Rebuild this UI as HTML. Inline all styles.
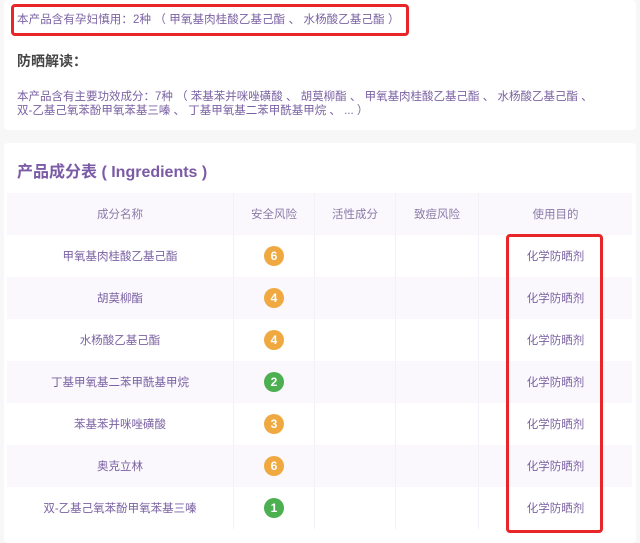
<!DOCTYPE html>
<html><head><meta charset="utf-8"><style>
body{margin:0;width:640px;height:543px;background:#f7f7f7;font-family:"Liberation Sans","Noto Sans CJK SC",sans-serif;position:relative;overflow:hidden}
.card{position:absolute;left:4px;width:632px;background:#fff;border-radius:4px}
.p{color:#7b62a3;font-size:11.5px}
.red{position:absolute;border:3px solid #e8262a;border-radius:4px}
table{position:absolute;left:7px;top:193px;width:625px;border-collapse:collapse;font-size:11.5px;color:#7b62a3}
td{height:42px;text-align:center;padding:0;border-right:1px solid #f3f0f7}
td:last-child{border-right:none}
tr:nth-child(odd){background:#faf8fd}
tr:first-child td{color:#8a7aa8}
.b{display:inline-block;width:20px;height:20px;border-radius:50%;color:#fff;font-size:12px;line-height:20px;font-weight:bold}
.o{background:#f0a940}.g{background:#4caf50}
</style></head><body>
<div class="card" style="top:0;height:130px"></div>
<div class="card" style="top:143px;height:400px"></div>
<div class="p" style="position:absolute;left:17px;top:11px;letter-spacing:0.1px">本产品含有孕妇慎用：2种 （ 甲氧基肉桂酸乙基己酯 、 水杨酸乙基己酯 ）</div>
<div class="red" style="left:11px;top:4px;width:392px;height:26px"></div>
<div style="position:absolute;left:17px;top:51px;font-size:14px;font-weight:bold;color:#444">防晒解读：</div>
<div class="p" style="position:absolute;left:17px;top:90px;line-height:14px">本产品含有主要功效成分：7种 （ 苯基苯并咪唑磺酸 、 胡莫柳酯 、 甲氧基肉桂酸乙基己酯 、 水杨酸乙基己酯 、<br>双-乙基己氧苯酚甲氧苯基三嗪 、 丁基甲氧基二苯甲酰基甲烷 、 ... ）</div>
<div style="position:absolute;left:17px;top:158px;font-size:16px;font-weight:bold;color:#7b5aa6">产品成分表 ( Ingredients )</div>
<table>
<tr><td style="width:226px">成分名称</td><td style="width:80px">安全风险</td><td style="width:80px">活性成分</td><td style="width:82px">致痘风险</td><td>使用目的</td></tr>
<tr><td>甲氧基肉桂酸乙基己酯</td><td><span class="b o">6</span></td><td></td><td></td><td>化学防晒剂</td></tr>
<tr><td>胡莫柳酯</td><td><span class="b o">4</span></td><td></td><td></td><td>化学防晒剂</td></tr>
<tr><td>水杨酸乙基己酯</td><td><span class="b o">4</span></td><td></td><td></td><td>化学防晒剂</td></tr>
<tr><td>丁基甲氧基二苯甲酰基甲烷</td><td><span class="b g">2</span></td><td></td><td></td><td>化学防晒剂</td></tr>
<tr><td>苯基苯并咪唑磺酸</td><td><span class="b o">3</span></td><td></td><td></td><td>化学防晒剂</td></tr>
<tr><td>奥克立林</td><td><span class="b o">6</span></td><td></td><td></td><td>化学防晒剂</td></tr>
<tr><td>双-乙基己氧苯酚甲氧苯基三嗪</td><td><span class="b g">1</span></td><td></td><td></td><td>化学防晒剂</td></tr>
</table>
<div class="red" style="left:506px;top:234px;width:91px;height:293px"></div>
</body></html>
